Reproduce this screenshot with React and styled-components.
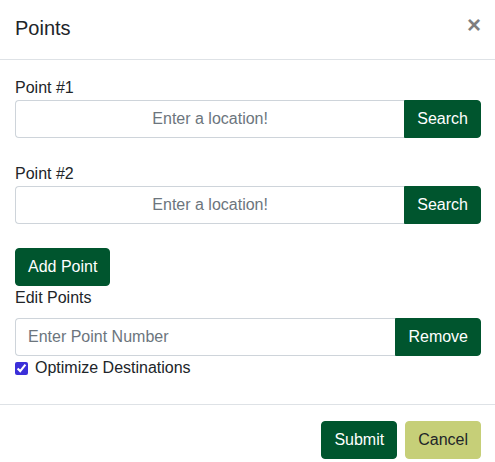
import React from "react";
import styled, { createGlobalStyle } from "styled-components";

const GlobalStyle = createGlobalStyle`
    body {
        margin: 0;
        background: #fff;
        font-family: "Liberation Sans", Arial, sans-serif;
        font-size: 16px;
        color: #212529;
    }
`;

const Modal = styled.div`
    width: 495px;
    background: #fff;
`;

const Header = styled.div`
    display: flex;
    align-items: flex-start;
    justify-content: space-between;
    box-sizing: border-box;
    height: 60px;
    padding: 13px 14px 0 15px;
    border-bottom: 1px solid #dee2e6;
`;

const Title = styled.h5`
    margin: 0;
    font-size: 20px;
    font-weight: 400;
    line-height: 30px;
`;

const Close = styled.button`
    border: none;
    background: none;
    padding: 0;
    font-family: inherit;
    font-size: 24px;
    font-weight: 700;
    line-height: 24px;
    color: #000;
    opacity: 0.5;
    cursor: pointer;
`;

const Body = styled.div`
    padding: 16px 14px 24px 15px;
`;

const Label = styled.div`
    line-height: 24px;
    margin-bottom: ${p => p.mb || "0"};
`;

const Group = styled.div`
    display: flex;
    height: 38px;
    margin-bottom: ${p => p.mb || "0"};
`;

const Input = styled.input`
    flex: 1;
    min-width: 0;
    box-sizing: border-box;
    height: 38px;
    border: 1px solid #ced4da;
    border-right: none;
    border-radius: 4px 0 0 4px;
    padding: 0 12px;
    font-family: inherit;
    font-size: 16px;
    color: #495057;
    text-align: ${p => p.align || "left"};
    outline: none;

    &::placeholder {
        color: #6c757d;
    }
`;

const Button = styled.button`
    box-sizing: border-box;
    height: 38px;
    padding: 0 12px;
    border: 1px solid ${p => p.bg || "#00552e"};
    background: ${p => p.bg || "#00552e"};
    color: ${p => p.fg || "#fff"};
    font-family: inherit;
    font-size: 16px;
    line-height: 1.5;
    border-radius: ${p => p.radius || "4px"};
    cursor: pointer;
`;

const AddRow = styled.div`
    display: flex;
`;

const CheckRow = styled.label`
    display: flex;
    align-items: center;
    gap: 7px;
    line-height: 24px;
`;

const Check = styled.input`
    margin: 0;
    width: 13px;
    height: 13px;
    accent-color: #3b2fd9;
`;

const Footer = styled.div`
    display: flex;
    justify-content: flex-end;
    gap: 8px;
    padding: 16px 14px 16px 15px;
    border-top: 1px solid #dee2e6;
`;

const PointField = ({ n }) => (
    <>
        <Label>Point #{n}</Label>
        <Group mb="24px">
            <Input align="center" placeholder="Enter a location!" />
            <Button radius="0 4px 4px 0">Search</Button>
        </Group>
    </>
);

export default function App() {
    return (
        <>
            <GlobalStyle />
            <Modal>
                <Header>
                    <Title>Points</Title>
                    <Close>×</Close>
                </Header>
                <Body>
                    <PointField n={1} />
                    <PointField n={2} />
                    <AddRow>
                        <Button>Add Point</Button>
                    </AddRow>
                    <Label mb="8px">Edit Points</Label>
                    <Group>
                        <Input placeholder="Enter Point Number" />
                        <Button radius="0 4px 4px 0">Remove</Button>
                    </Group>
                    <CheckRow>
                        <Check type="checkbox" defaultChecked />
                        Optimize Destinations
                    </CheckRow>
                </Body>
                <Footer>
                    <Button>Submit</Button>
                    <Button bg="#c6cf78" fg="#212529">Cancel</Button>
                </Footer>
            </Modal>
        </>
    );
}
